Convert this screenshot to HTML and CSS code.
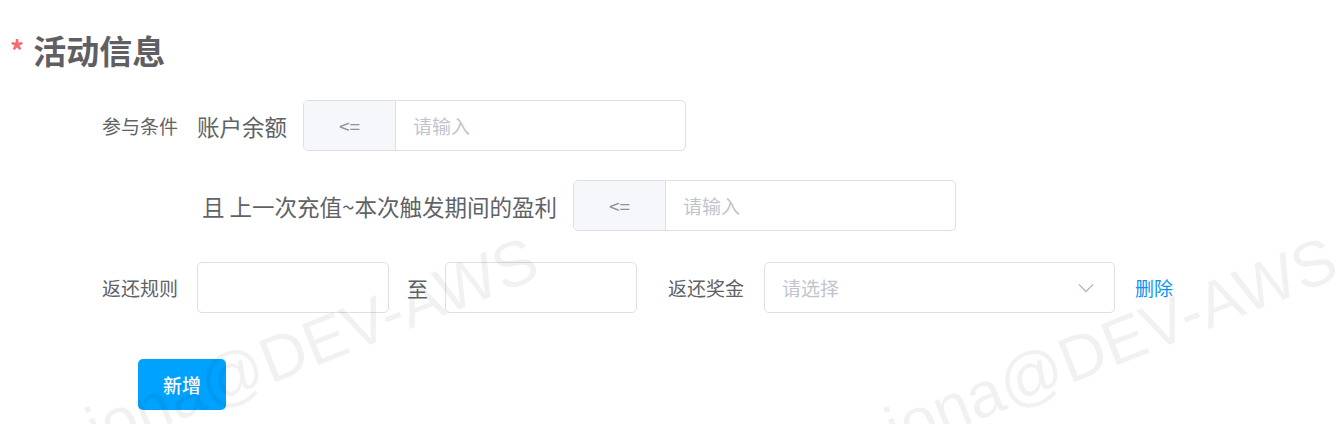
FILE: index.html
```html
<!DOCTYPE html>
<html lang="zh-CN">
<head>
<meta charset="utf-8">
<title>活动信息</title>
<link rel="stylesheet" href="styles.css">
</head>
<body>
<div class="page">
  <h2 class="title"><span class="req">*</span>活动信息</h2>
  <div class="form">
    <div class="row row1">
      <label class="label">参与条件</label>
      <div class="content">
        <span class="cond-text">账户余额</span>
        <div class="group">
          <div class="prepend">&lt;=</div>
          <div class="input ph">请输入</div>
        </div>
      </div>
    </div>
    <div class="row row2">
      <label class="label"></label>
      <div class="content">
        <span class="cond-text cond-long">且 上一次充值~本次触发期间的盈利</span>
        <div class="group">
          <div class="prepend">&lt;=</div>
          <div class="input ph">请输入</div>
        </div>
      </div>
    </div>
    <div class="row row3">
      <label class="label">返还规则</label>
      <div class="content">
        <div class="box small"></div>
        <span class="to">至</span>
        <div class="box small"></div>
        <span class="label2">返还奖金</span>
        <div class="box select">
          <span class="ph">请选择</span>
          <svg class="chev" width="16" height="10" viewBox="0 0 16 10"><path d="M1 1.5 L8 8.5 L15 1.5" fill="none" stroke="#b4b7bd" stroke-width="1.3"/></svg>
        </div>
        <a class="del">删除</a>
      </div>
    </div>
    <div class="actions">
      <button class="btn">新增</button>
    </div>
  </div>
  <div class="wm wm1">iona@DEV-AWS</div>
  <div class="wm wm2">iona@DEV-AWS</div>
</div>
</body>
</html>
```
FILE: styles.css
```css
html, body {
  margin: 0;
  padding: 0;
  background: #ffffff;
}
body {
  font-family: "Noto Sans CJK SC", "Noto Sans", "Liberation Sans", sans-serif;
  color: #606266;
  width: 1338px;
  height: 424px;
  overflow: hidden;
}
.page {
  position: relative;
  width: 1338px;
  height: 424px;
  overflow: hidden;
}
.title {
  margin: 0;
  padding: 27px 0 0 10px;
  height: 46px;
  display: flex;
  align-items: center;
  font-size: 33px;
  font-weight: 600;
  color: #5f5f63;
  line-height: 46px;
}
.req {
  color: #f56c6c;
  font-size: 28px;
  margin-right: 9px;
  font-weight: 700;
}
.form {
  padding-top: 27px;
}
.row {
  display: flex;
  align-items: center;
  height: 51px;
}
.row2 { margin-top: 29px; }
.row3 { margin-top: 31px; }
.label {
  width: 178px;
  box-sizing: border-box;
  text-align: right;
  font-size: 19px;
  color: #606266;
  flex: none;
}
.content {
  display: flex;
  align-items: center;
  margin-left: 19px;
}
.cond-text {
  font-size: 22.5px;
  color: #606266;
  margin-right: 16px;
}
.cond-long {
  margin-left: 5px;
}
.group {
  display: flex;
  width: 383px;
  height: 51px;
  box-sizing: border-box;
  border: 1.5px solid #dcdfe6;
  border-radius: 5px;
  overflow: hidden;
}
.prepend {
  width: 91px;
  background: #f5f7fa;
  border-right: 1.5px solid #dcdfe6;
  display: flex;
  align-items: center;
  justify-content: center;
  font-size: 19px;
  color: #909399;
  flex: none;
}
.input {
  flex: 1;
  display: flex;
  align-items: center;
  padding-left: 17px;
}
.ph { color: #c0c4cc; font-size: 19px; }
.box {
  height: 51px;
  box-sizing: border-box;
  border: 1.5px solid #dcdfe6;
  border-radius: 5px;
  flex: none;
}
.small { width: 192px; }
.to {
  font-size: 21px;
  margin: 0 17px 0 18px;
  color: #606266;
}
.label2 {
  font-size: 19px;
  color: #606266;
  margin-left: 31px;
  margin-right: 20px;
}
.select {
  width: 351px;
  display: flex;
  align-items: center;
  justify-content: space-between;
  padding: 0 20px 0 17px;
}
.chev { margin-top: 1px; }
.del {
  margin-left: 20px;
  font-size: 19px;
  color: #0a93f5;
  cursor: pointer;
}
.actions {
  padding: 46px 0 0 138px;
}
.btn {
  width: 88px;
  height: 51px;
  border: none;
  border-radius: 5px;
  background: #00a2ff;
  color: #ffffff;
  font-family: "Noto Sans CJK SC", sans-serif;
  font-size: 19px;
  font-weight: 500;
  padding: 0;
}
.wm {
  position: absolute;
  font-family: "Liberation Sans", Arial, sans-serif;
  font-size: 64px;
  color: rgba(0, 0, 0, 0.055);
  white-space: nowrap;
  transform-origin: 0 100%;
  transform: rotate(-21.6deg);
  line-height: 1;
  pointer-events: none;
}
.wm1 { left: 101px; top: 398px; }
.wm2 { left: 900px; top: 398px; }
```
